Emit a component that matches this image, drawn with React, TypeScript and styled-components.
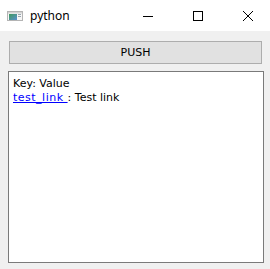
import React from "react";
import styled, { createGlobalStyle } from "styled-components";

const Global = createGlobalStyle`
  html, body { margin: 0; padding: 0; background: #f0f0f0; }
  body { width: 270px; height: 269px; overflow: hidden; }
`;

const Window = styled.div`
  width: 270px;
  height: 269px;
  display: flex;
  flex-direction: column;
  background: #f0f0f0;
  font-family: "Noto Sans", "Open Sans", sans-serif;
`;

const TitleBar = styled.div`
  height: 31px;
  background: #ffffff;
  display: flex;
  align-items: center;
  padding-left: 7px;
`;

const TitleText = styled.span`
  font-family: "Noto Sans", sans-serif;
  font-size: 12px;
  color: #000;
  margin-left: 7px;
  flex: 1;
`;

const CaptionGroup = styled.div`
  display: flex;
  align-items: center;
  gap: 40px;
  margin-right: 17px;
`;

const CaptionButton = styled.div`
  width: 10px;
  height: 10px;
  display: flex;
  align-items: center;
  justify-content: center;
`;

const Body = styled.div`
  flex: 1;
  display: flex;
  flex-direction: column;
  padding: 10px 6px 6px 8px;
  gap: 7px;
`;

const PushButton = styled.button`
  height: 23px;
  margin: 0 2px 0 1px;
  background: #e1e1e1;
  border: 1px solid #adadad;
  font-family: "DejaVu Sans", sans-serif;
  font-size: 11px;
  color: #000;
  padding: 0;
`;

const TextBox = styled.div`
  flex: 1;
  background: #fff;
  border: 1px solid #7a7a7a;
  padding: 5px 4px;
  font-family: "DejaVu Sans", sans-serif;
  font-size: 11px;
  line-height: 14px;
  color: #000;
`;

const Line = styled.div``;

const Link = styled.a`
  color: #0000ff;
  text-decoration: underline;
  letter-spacing: 0.5px;
`;

const AppIcon = () => (
  <svg width="16" height="10" viewBox="0 0 16 10">
    <rect x="0.5" y="0.5" width="15" height="9" fill="#f6f6f6" stroke="#b4b4b4" />
    <rect x="1" y="1" width="14" height="1.5" fill="#d4d4d4" />
    <defs>
      <linearGradient id="g" x1="0" y1="0" x2="1" y2="1">
        <stop offset="0" stopColor="#3e9a5c" />
        <stop offset="1" stopColor="#5b8fd0" />
      </linearGradient>
    </defs>
    <rect x="2" y="3" width="8" height="6" fill="url(#g)" />
    <rect x="11" y="3" width="3" height="1" fill="#9aa6b0" />
    <rect x="11" y="5" width="3" height="1" fill="#9aa6b0" />
  </svg>
);

export default function App() {
  return (
    <>
      <Global />
      <Window>
        <TitleBar>
          <AppIcon />
          <TitleText>python</TitleText>
          <CaptionGroup>
            <CaptionButton>
              <svg width="10" height="10" viewBox="0 0 10 10">
                <line x1="0" y1="5.5" x2="10" y2="5.5" stroke="#000" strokeWidth="1" />
              </svg>
            </CaptionButton>
            <CaptionButton>
              <svg width="10" height="10" viewBox="0 0 10 10">
                <rect x="0.5" y="0.5" width="9" height="9" fill="none" stroke="#000" strokeWidth="1" />
              </svg>
            </CaptionButton>
            <CaptionButton>
              <svg width="10" height="10" viewBox="0 0 10 10">
                <path d="M0 0 L10 10 M10 0 L0 10" stroke="#000" strokeWidth="1" />
              </svg>
            </CaptionButton>
          </CaptionGroup>
        </TitleBar>
        <Body>
          <PushButton>PUSH</PushButton>
          <TextBox>
            <Line>Key: Value</Line>
            <Line>
              <Link>test_link </Link> : Test link
            </Line>
          </TextBox>
        </Body>
      </Window>
    </>
  );
}
